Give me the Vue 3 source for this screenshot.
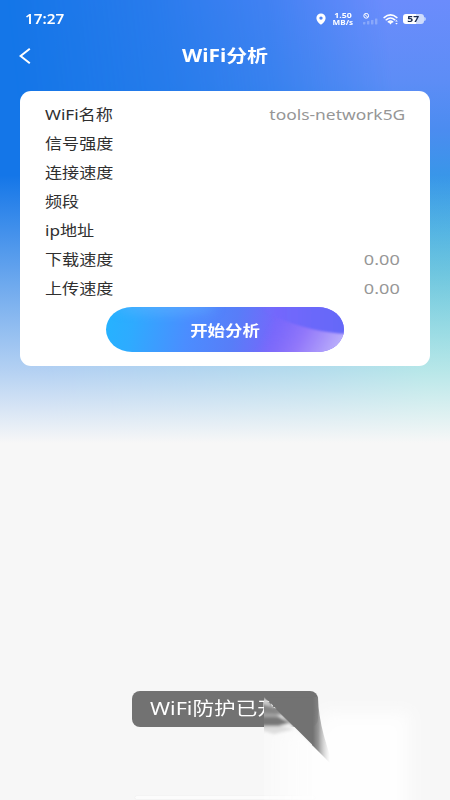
<script setup>
const rows = [
  { label: 'WiFi名称', value: 'tools-network5G', cls: 'name' },
  { label: '信号强度', value: '' },
  { label: '连接速度', value: '' },
  { label: '频段', value: '' },
  { label: 'ip地址', value: '' },
  { label: '下载速度', value: '0.00', cls: 'num' },
  { label: '上传速度', value: '0.00', cls: 'num' },
]
</script>

<template>
  <main class="screen">
    <header class="status">
      <span class="time">17:27</span>
      <div class="indicators">
        <svg class="pin" viewBox="0 0 10 12"><path fill-rule="evenodd" d="M5 0.5a4.6 4.6 0 0 1 4.6 4.6C9.6 8.1 6.5 11 5 11.8 3.5 11 .4 8.1.4 5.1A4.6 4.6 0 0 1 5 .5zm0 2.9a1.7 1.7 0 1 0 0 3.4 1.7 1.7 0 0 0 0-3.4z" /></svg>
        <div class="rate"><span>1.50</span><span>MB/s</span></div>
        <svg class="signal" viewBox="0 0 16 12">
          <g fill="none" stroke="#fff" stroke-width="1"><circle cx="4.2" cy="2.8" r="2.4" /><path d="M2.5 1.2 5.9 4.4" /></g>
          <g fill="#fff" opacity=".25"><rect x="1" y="9" width="2.4" height="2.4" rx=".6" /><rect x="5" y="8" width="2.4" height="3.4" rx=".6" /><rect x="9" y="7" width="2.4" height="4.4" rx=".6" /><rect x="13" y="5.5" width="2.4" height="5.9" rx=".6" /></g>
        </svg>
        <svg class="wifi" viewBox="0 0 16 11">
          <g fill="none" stroke="#fff" stroke-width="1.5" stroke-linecap="round"><path d="M1.1 3.6Q7.5-1.8 13.9 3.6M3.2 5.8Q7.5 2.3 11.8 5.8M5.3 7.9Q7.5 6.1 9.7 7.9" /></g>
          <path d="M5.6 8.2Q7.5 7.1 9.4 8.2L7.5 10.4z" fill="#fff" />
          <path d="m12.2 7.5 1.3-1.4 1.3 1.4zm0 1.4 1.3 1.5 1.3-1.5z" fill="#fff" />
        </svg>
        <div class="battery"><span>57</span></div>
      </div>
    </header>

    <nav class="titlebar">
      <svg class="back" viewBox="0 0 12 16"><path d="M10.8.8 1.6 8l9.2 7.2" fill="none" stroke="#fff" stroke-width="2" /></svg>
      <h1><span>WiFi分析</span></h1>
    </nav>

    <section class="card">
      <div v-for="row in rows" :key="row.label" class="row">
        <span class="label">{{ row.label }}</span>
        <span v-if="row.value" class="value" :class="row.cls">{{ row.value }}</span>
      </div>
      <button class="start">
        <svg class="sheen" viewBox="0 0 238 45" preserveAspectRatio="none">
          <defs>
            <filter id="soft" x="-30%" y="-60%" width="160%" height="220%"><feGaussianBlur stdDeviation="6" /></filter>
            <filter id="edge" x="-10%" y="-40%" width="120%" height="180%"><feGaussianBlur stdDeviation="1.2" /></filter>
            <linearGradient id="violet" gradientUnits="userSpaceOnUse" x1="150" y1="0" x2="238" y2="0"><stop offset="0" stop-color="#7468ff" stop-opacity="0" /><stop offset=".4" stop-color="#7068fb" /><stop offset="1" stop-color="#6467f8" /></linearGradient>
            <linearGradient id="lilac" gradientUnits="userSpaceOnUse" x1="168" y1="8" x2="232" y2="44"><stop offset="0" stop-color="#8668fa" stop-opacity="0" /><stop offset=".5" stop-color="#967bfa" stop-opacity=".9" /><stop offset="1" stop-color="#bdb2fb" /></linearGradient>
          </defs>
          <ellipse cx="60" cy="0" rx="50" ry="7" fill="#68b6ff" opacity=".5" filter="url(#soft)" />
          <path d="M140 -6H245V28Q205 27 165 8z" fill="url(#violet)" filter="url(#edge)" />
          <path d="M130 50 165 8Q205 26 243 27V50z" fill="url(#lilac)" filter="url(#edge)" />
        </svg>
        <span class="caption">开始分析</span>
      </button>
    </section>

    <div class="toast"><span>WiFi防护已开</span></div>
    <div class="homebar"></div>

    <svg class="fold" viewBox="0 0 450 120">
      <defs>
        <filter id="haze" x="-20%" y="-20%" width="140%" height="140%"><feGaussianBlur stdDeviation="8" /></filter>
        <filter id="fine" x="-10%" y="-10%" width="120%" height="120%"><feGaussianBlur stdDeviation=".7" /></filter>
        <filter id="streak" x="-10%" y="-20%" width="120%" height="140%"><feGaussianBlur stdDeviation="1.6" /></filter>
        <clipPath id="right"><rect x="264" y="17" width="186" height="103" /></clipPath>
        <clipPath id="under"><path d="M264 17 340 93V120H264z" /></clipPath>
        <linearGradient id="pale" gradientUnits="userSpaceOnUse" x1="264" y1="0" x2="310" y2="0"><stop offset="0" stop-color="#fff" stop-opacity=".2" /><stop offset="1" stop-color="#fff" stop-opacity=".9" /></linearGradient>
        <linearGradient id="wedge" gradientUnits="userSpaceOnUse" x1="313" y1="0" x2="330" y2="0"><stop offset="0" stop-color="#727272" /><stop offset=".3" stop-color="#828282" stop-opacity=".85" /><stop offset=".6" stop-color="#999" stop-opacity=".45" /><stop offset="1" stop-color="#bbb" stop-opacity="0" /></linearGradient>
      </defs>
      <g clip-path="url(#right)">
        <path d="M256 47H322V32H410V140H256z" fill="url(#pale)" filter="url(#haze)" />
        <g clip-path="url(#under)">
          <g filter="url(#streak)">
            <path d="M264 17 316 69V50L264 47z" fill="#f5f5f5" />
            <path d="M258 23 272 25 282 35 264 34H258z" fill="#858585" />
            <path d="M258 18 268 20 273 27 258 23z" fill="#ccc" />
            <path d="M258 37 278 36 290 43 275 47 258 46z" fill="#777" />
            <path d="M258 33 275 34 280 37 258 37z" fill="#a5a5a5" />
            <path d="M258 46 280 46 294 49 274 54 258 49z" fill="#ddd" />
          </g>
        </g>
        <path d="M265 17.5H313V65.5z" fill="#727272" filter="url(#fine)" />
        <path d="M312 17H318Q318.5 36 324 56L333 86 312 65z" fill="url(#wedge)" filter="url(#fine)" />
      </g>
    </svg>
  </main>
</template>

<style>
body { margin: 0; }
</style>

<style scoped>
.screen {
  position: relative;
  isolation: isolate;
  display: flex;
  flex-direction: column;
  box-sizing: border-box;
  width: 450px;
  height: 800px;
  overflow: hidden;
  font-family: "Noto Sans", "Noto Sans CJK SC", sans-serif;
  background: #1476e8;
}
.screen::before, .screen::after { content: ""; position: absolute; inset: 0; z-index: -1; }
.screen::before {
  background: linear-gradient(180deg, #6b8cfc 0, #5d8df6 80px, #4b8cf0 130px, #3797e8 180px, #2ca3de 230px, #23abd2 275px, #20c0c6 370px);
  -webkit-mask-image: linear-gradient(84deg, transparent 90px, rgba(0,0,0,.25) 240px, rgba(0,0,0,.52) 350px, #000 465px);
  mask-image: linear-gradient(84deg, transparent 90px, rgba(0,0,0,.25) 240px, rgba(0,0,0,.52) 350px, #000 465px);
}
.screen::after {
  background: linear-gradient(180deg, rgba(247,247,247,0) 175px, rgba(247,247,247,.38) 280px, rgba(247,247,247,.7) 370px, #f7f7f7 443px);
}
.status {
  display: flex;
  justify-content: space-between;
  align-items: center;
  height: 38px;
  padding: 0 24px 0 25px;
  color: #fff;
}
.time { font-size: 13.5px; font-weight: 600; line-height: 18px; transform: scaleX(1.13); transform-origin: left; }
.indicators { display: flex; align-items: center; height: 16px; }
.pin { width: 10px; height: 12px; fill: #fff; margin-right: 6px; }
.rate { display: flex; flex-direction: column; align-items: center; width: 21px; font-size: 7px; line-height: 7px; font-weight: 700; margin-right: 9px; }
.rate span { height: 7px; transform: scaleX(1.16); }
.rate span:first-child { transform: scaleX(1.25); }
.signal { width: 16px; height: 12px; margin-right: 5px; }
.wifi { width: 16px; height: 11px; margin-right: 4px; }
.battery { position: relative; display: flex; align-items: center; justify-content: center; width: 21px; height: 10px; margin-right: 2px; border-radius: 3px; color: #1b2c50; background: linear-gradient(90deg, #fff 60%, #cedcfc 62%); }
.battery::after { content: ""; position: absolute; right: -1.5px; top: 3px; width: 2px; height: 4px; border-radius: 0 2px 2px 0; background: #b9cefd; }
.battery span { font-size: 9px; line-height: 10px; font-weight: 700; transform: scaleX(1.15); }

.titlebar { display: flex; align-items: center; height: 36px; padding: 0 19px; margin-bottom: 17px; }
.back { width: 12px; height: 16px; }
h1 { flex: 1; margin: 0 12px 0 0; text-align: center; color: #fff; font-size: 17px; line-height: 24px; font-weight: 700; }
h1 span { display: inline-block; transform: scaleX(1.23); }

.card { display: flex; flex-direction: column; box-sizing: border-box; width: 410px; height: 275px; margin: 0 20px; padding: 8px 25px 0; border-radius: 11px; background: #fff; }
.row { display: flex; align-items: center; justify-content: space-between; flex: 0 0 29px; height: 29px; }
.label, .value { display: inline-block; white-space: nowrap; line-height: 20px; }
.label { color: #2f2f2f; font-size: 14.5px; transform: translateY(-.5px) scaleX(1.18); transform-origin: left; }
.value { color: #969696; font-size: 14.5px; transform: translateY(-.5px) scaleX(1.2); transform-origin: right; }
.num { margin-right: 5px; transform: translateY(-.5px) scaleX(1.25); }
.start { position: relative; align-self: center; flex: 0 0 45px; width: 238px; height: 45px; margin: 5px 0 0; padding: 0; border: 0; border-radius: 26px / 22.5px; overflow: hidden; color: #fff; font-family: inherit; background: linear-gradient(100deg, #25b3ff 0, #2eabff 12%, #4b8dff 35%, #587df8 54%, #7568fb 70%, #7b69fb 100%); }
.sheen { position: absolute; left: 0; top: 0; width: 238px; height: 45px; }
.caption { position: relative; display: inline-block; font-size: 14.5px; line-height: 20px; font-weight: 700; transform: scaleX(1.2); }

.toast { display: flex; align-items: center; align-self: flex-start; box-sizing: border-box; width: 186px; height: 36px; margin: 325px 0 0 132px; padding: 0 0 2px 18px; border-radius: 8px; background: #727272; color: #fff; font-size: 18px; white-space: nowrap; }
.toast span { display: inline-block; line-height: 24px; transform: scaleX(1.2); transform-origin: left; }
.homebar { align-self: flex-start; width: 180px; height: 3px; margin: 69px 0 0 135px; border-radius: 3px; background: #fcfcfc; box-shadow: 0 0 1px #ddd; }
.fold { position: absolute; left: 0; top: 680px; width: 450px; height: 120px; }
</style>
